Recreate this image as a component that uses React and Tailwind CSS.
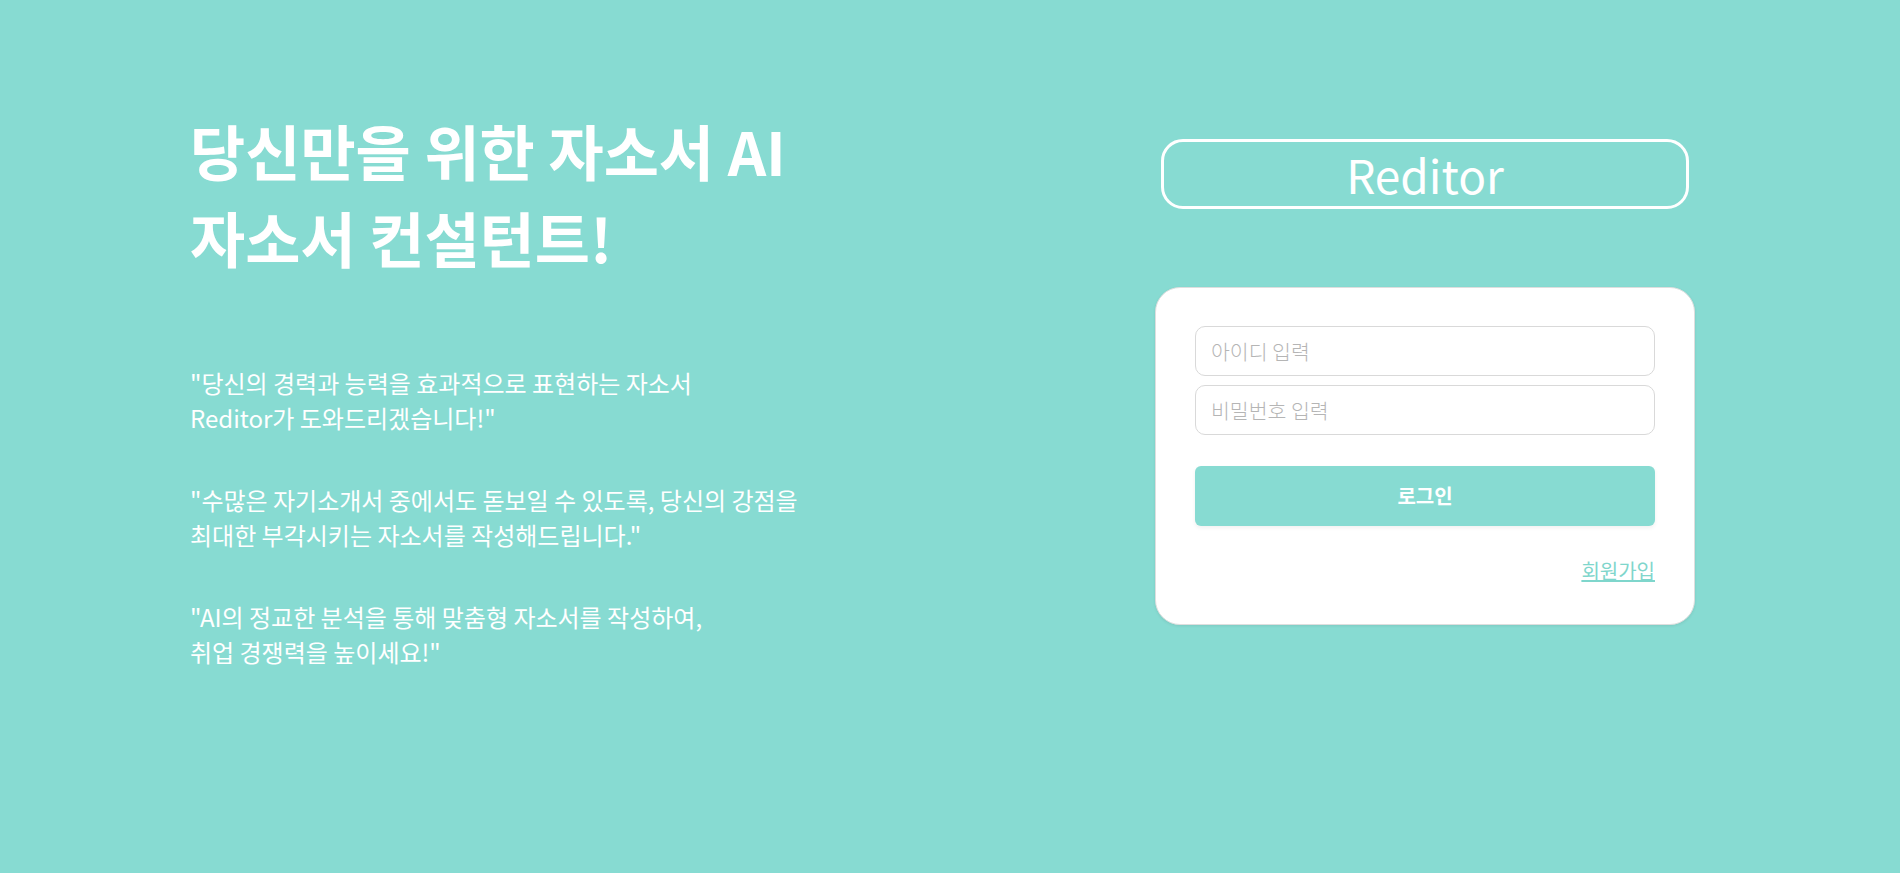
import { useState } from 'react'

const KR = { fontFamily: '"Noto Sans CJK KR", "Noto Sans", sans-serif' }

export default function App() {
  const [userId, setUserId] = useState('')
  const [password, setPassword] = useState('')

  return (
    <div className="w-full h-[873px] bg-[#87dbd2] grid grid-cols-2 overflow-hidden" style={KR}>

      {/* Left: intro copy */}
      <div className="pl-[190px] pt-[106px]">
        <h1 className="text-[60px] leading-[87px] font-bold text-white whitespace-nowrap">
          <div>당신만을 위한 자소서 AI</div>
          <div>자소서 컨설턴트!</div>
        </h1>

        <div className="mt-[85px] space-y-[47px] text-white text-[24px] leading-[35px] whitespace-nowrap">
          <p>"당신의 경력과 능력을 효과적으로 표현하는 자소서<br />Reditor가 도와드리겠습니다!"</p>
          <p>"수많은 자기소개서 중에서도 돋보일 수 있도록, 당신의 강점을<br />최대한 부각시키는 자소서를 작성해드립니다."</p>
          <p>"AI의 정교한 분석을 통해 맞춤형 자소서를 작성하여,<br />취업 경쟁력을 높이세요!"</p>
        </div>
      </div>

      {/* Right: login */}
      <div className="flex justify-center pt-[139px]">
        <div className="w-[540px]">
          <div className="mx-[6px] h-[70px] border-[3px] border-white rounded-[22px] flex items-center justify-center">
            <span className="text-white text-[46px] leading-none">Reditor</span>
          </div>

          <div className="mt-[78px] bg-white rounded-[25px] border border-[#dedede] shadow-[0_1px_3px_rgba(0,0,0,0.08)] px-[39px] pt-[38px] pb-[40px]">
            <div className="space-y-[9px]">
              <input
                value={userId}
                onChange={e => setUserId(e.target.value)}
                placeholder="아이디 입력"
                className="w-full h-[50px] border border-[#d9d9d9] rounded-[10px] px-[15px] text-[20.5px] font-light text-gray-700 placeholder:text-[#b5b5b5] focus:outline-none"
                style={KR}
              />
              <input
                type="password"
                value={password}
                onChange={e => setPassword(e.target.value)}
                placeholder="비밀번호 입력"
                className="w-full h-[50px] border border-[#d9d9d9] rounded-[10px] px-[15px] text-[20.5px] font-light text-gray-700 placeholder:text-[#b5b5b5] focus:outline-none"
                style={KR}
              />
            </div>

            <button
              className="mt-[31px] w-full h-[60px] bg-[#87dbd2] rounded-[6px] shadow-[0_2px_4px_rgba(0,0,0,0.06)] text-white text-[20px] font-bold"
              style={KR}
            >로그인</button>

            <div className="mt-[32px] flex justify-end">
              <a href="#" className="text-[20px] leading-[26px] text-[#7fd6cc] underline">회원가입</a>
            </div>
          </div>
        </div>
      </div>
    </div>
  )
}
